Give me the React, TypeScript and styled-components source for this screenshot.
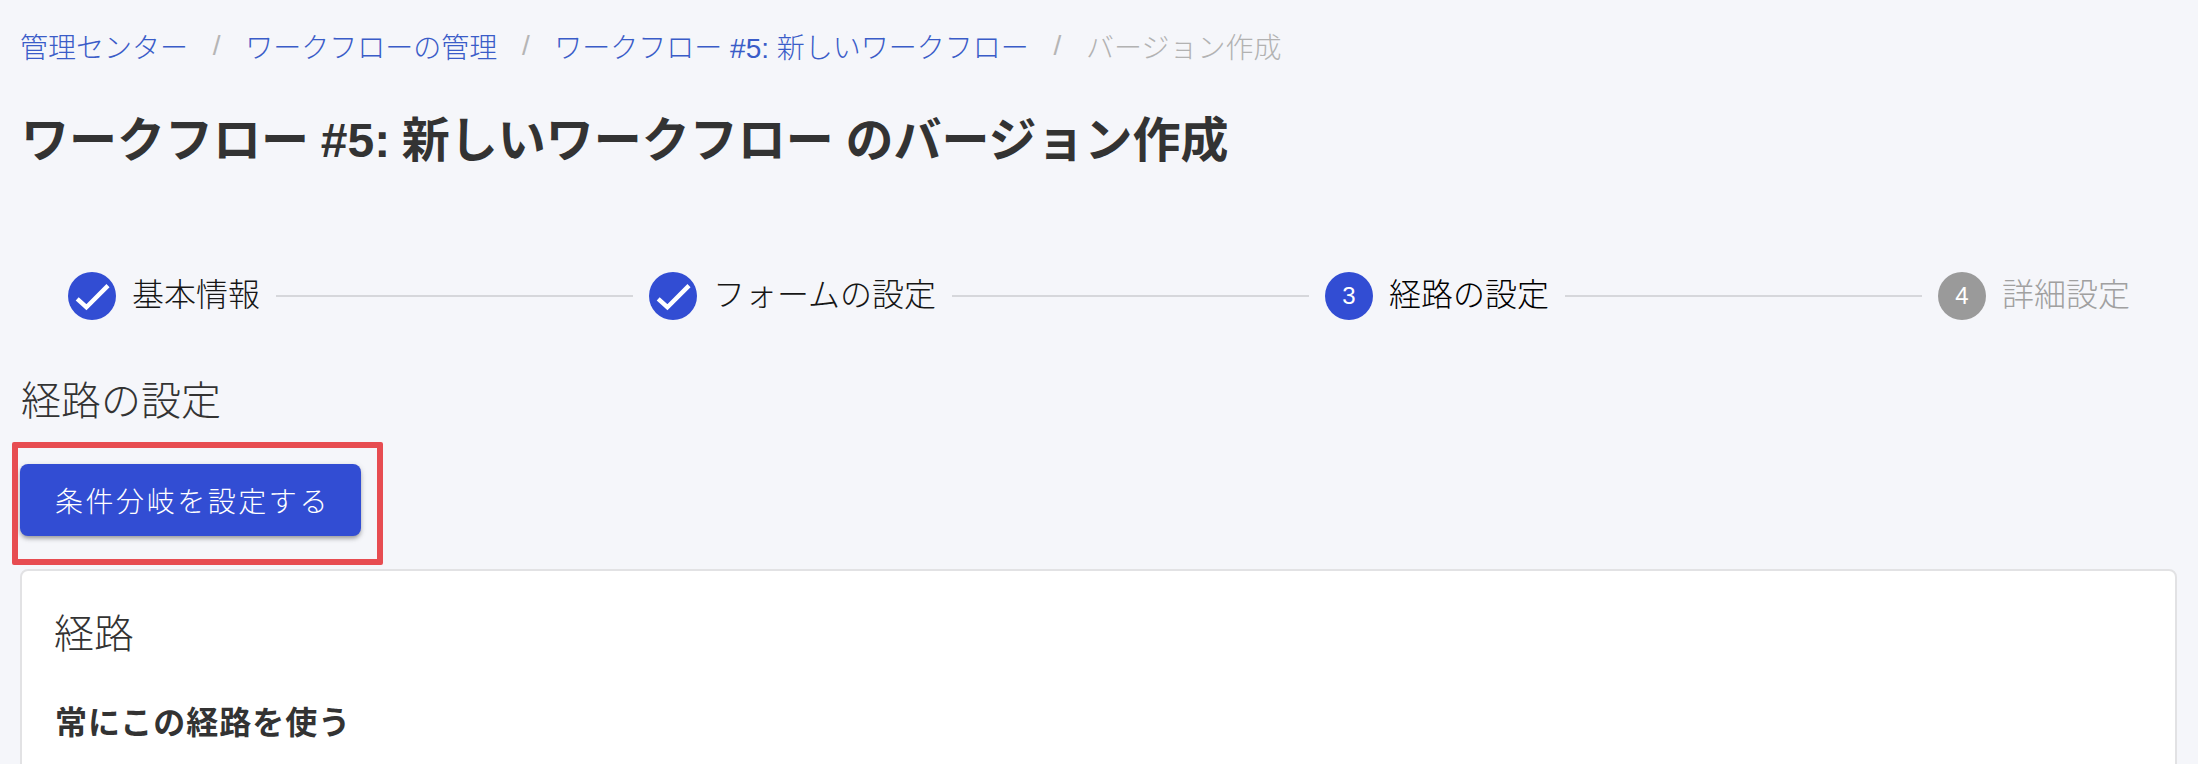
import styled, { createGlobalStyle } from "styled-components";

const primary = "#324dd3";
const fontStack = `"Liberation Sans", "Noto Sans CJK JP", sans-serif`;

const GlobalStyle = createGlobalStyle`
  html, body {
    margin: 0;
    padding: 0;
    height: 764px;
    overflow: hidden;
    background: #f5f6fa;
    font-family: ${fontStack};
  }
`;

const steps = [
  { label: "基本情報", state: "done" },
  { label: "フォームの設定", state: "done" },
  { label: "経路の設定", state: "active" },
  { label: "詳細設定", state: "todo" },
] as const;

type StepState = "done" | "active" | "todo";

const App = () => (
  <Page>
    <GlobalStyle />
    <Breadcrumbs>
      <Crumb>管理センター</Crumb>
      <Separator>/</Separator>
      <Crumb>ワークフローの管理</Crumb>
      <Separator>/</Separator>
      <Crumb>ワークフロー #5: 新しいワークフロー</Crumb>
      <Separator>/</Separator>
      <CurrentCrumb>バージョン作成</CurrentCrumb>
    </Breadcrumbs>
    <Title>ワークフロー #5: 新しいワークフロー のバージョン作成</Title>
    <Stepper>
      {steps.map((s, i) => (
        <StepGroup key={s.label} $last={i === steps.length - 1}>
          <Step>
            {s.state === "done" ? (
              <DoneIcon />
            ) : (
              <StepCircle $state={s.state}>{i + 1}</StepCircle>
            )}
            <StepLabel $state={s.state}>{s.label}</StepLabel>
          </Step>
          {i < steps.length - 1 && <Connector />}
        </StepGroup>
      ))}
    </Stepper>
    <SectionTitle>経路の設定</SectionTitle>
    <ButtonWrap>
      <PrimaryButton>条件分岐を設定する</PrimaryButton>
      <Highlight />
    </ButtonWrap>
    <Card>
      <CardTitle>経路</CardTitle>
      <RouteName>常にこの経路を使う</RouteName>
    </Card>
  </Page>
);

const DoneIcon = () => (
  <CheckSvg viewBox="0 0 24 24">
    <circle cx="12" cy="12" r="12" fill={primary} />
    <path
      d="M4.6 13.4 L9.2 17.6 L20 6.8"
      fill="none"
      stroke="#fff"
      strokeWidth="2.2"
    />
  </CheckSvg>
);

const Page = styled.div`
  padding: 26px 21px 0 20px;
`;

const Breadcrumbs = styled.nav`
  display: flex;
  align-items: center;
  height: 40px;
  font-size: 28px;
  font-weight: 300;
`;

const Crumb = styled.a`
  color: #3a5cc8;
`;

const CurrentCrumb = styled.span`
  color: #b2b2b2;
`;

const Separator = styled.span`
  color: #b5b5b5;
  margin: 0 24.7px;
`;

const Title = styled.h1`
  margin: 43px 0 0 1px;
  font-size: 48px;
  line-height: 64px;
  font-weight: 700;
  word-spacing: -1.6px;
  color: #333;
`;

const Stepper = styled.div`
  display: flex;
  align-items: center;
  margin-top: 99px;
  padding: 0 31px 0 32px;
`;

const StepGroup = styled.div<{ $last: boolean }>`
  display: flex;
  align-items: center;
  flex: ${(p) => (p.$last ? "0 0 auto" : "1 1 auto")};
`;

const Step = styled.div`
  display: flex;
  align-items: center;
  gap: 16px;
  padding: 0 16px;
`;

const CheckSvg = styled.svg`
  width: 48px;
  height: 48px;
  display: block;
`;

const StepCircle = styled.div<{ $state: StepState }>`
  width: 48px;
  height: 48px;
  border-radius: 50%;
  display: flex;
  align-items: center;
  justify-content: center;
  color: #fff;
  font-size: 24px;
  background: ${(p) => (p.$state === "active" ? primary : "#9a9a9a")};
`;

const StepLabel = styled.span<{ $state: StepState }>`
  font-size: 32px;
  line-height: 48px;
  font-weight: 300;
  white-space: nowrap;
  margin-top: -2px;
  color: ${(p) =>
    p.$state === "active" ? "#000" : p.$state === "todo" ? "#a0a0a0" : "#161616"};
`;

const Connector = styled.div`
  flex: 1;
  height: 2px;
  background: #d6d7db;
`;

const SectionTitle = styled.h2`
  margin: 53px 0 0 1px;
  font-size: 40px;
  line-height: 56px;
  font-weight: 300;
  color: #333;
`;

const ButtonWrap = styled.div`
  position: relative;
  width: fit-content;
  margin-top: 35px;
`;

const PrimaryButton = styled.button`
  display: block;
  width: 341px;
  height: 72px;
  padding: 0 0 0 4px;
  border: 0;
  border-radius: 8px;
  background: ${primary};
  color: #fff;
  font-family: ${fontStack};
  font-size: 28px;
  font-weight: 300;
  letter-spacing: 2.55px;
  box-shadow: 0 3px 4px -1px rgba(0, 0, 0, 0.3), 0 2px 6px rgba(0, 0, 0, 0.16);
`;

const Highlight = styled.div`
  position: absolute;
  top: -22px;
  left: -8px;
  right: -22px;
  bottom: -29px;
  border: 6px solid #e74c51;
  border-radius: 2px;
  pointer-events: none;
`;

const Card = styled.section`
  margin: 33px 0 0;
  padding: 35px 33px 40px;
  border: 2px solid #e2e2e4;
  border-radius: 8px;
  background: #fff;
`;

const CardTitle = styled.h3`
  margin: 0 0 0 -1px;
  font-size: 40px;
  line-height: 56px;
  font-weight: 300;
  color: #333;
`;

const RouteName = styled.div`
  margin-top: 37px;
  font-size: 32px;
  line-height: 48px;
  font-weight: 700;
  letter-spacing: 1px;
  color: #333;
`;

export default App;
